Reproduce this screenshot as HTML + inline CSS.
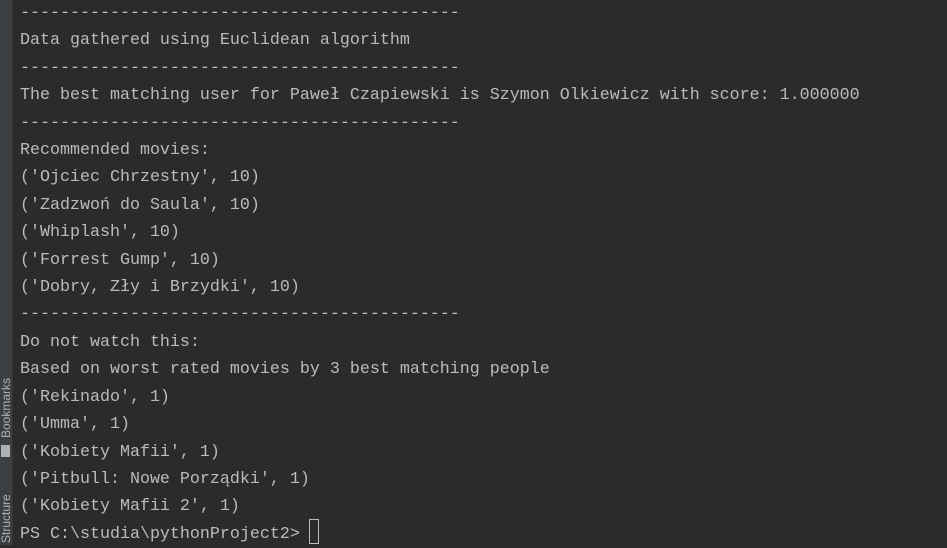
<!DOCTYPE html>
<html><head><meta charset="utf-8"><style>
html,body{margin:0;padding:0;width:947px;height:545px;overflow:hidden;background:#2b2b2b;}
#side{position:absolute;left:0;top:0;width:12px;height:545px;background:#3c3f41;border-right:1px solid #323232;}
.vt{position:absolute;left:-1px;transform-origin:0 0;transform:rotate(-90deg);font:12px "Liberation Sans",sans-serif;color:#aeb1b3;white-space:nowrap;}
#term{position:absolute;left:20px;top:0px;font-family:"Liberation Mono","DejaVu Sans Mono",monospace;font-size:16.67px;line-height:27.4px;color:#bbbbbb;white-space:pre;}
#cur{position:absolute;left:309px;top:519px;width:10px;height:25px;border:1px solid #bbbbbb;box-sizing:border-box;}
</style></head><body>
<div id="side">
<div class="vt" style="top:438px;">Bookmarks</div>
<div style="position:absolute;left:1px;top:445px;width:9px;height:12px;background:#aeb1b3;"></div>
<div class="vt" style="top:543px;">Structure</div>
</div>
<div id="term">--------------------------------------------
Data gathered using Euclidean algorithm
--------------------------------------------
The best matching user for Paweł Czapiewski is Szymon Olkiewicz with score: 1.000000
--------------------------------------------
Recommended movies:
('Ojciec Chrzestny', 10)
('Zadzwoń do Saula', 10)
('Whiplash', 10)
('Forrest Gump', 10)
('Dobry, Zły i Brzydki', 10)
--------------------------------------------
Do not watch this:
Based on worst rated movies by 3 best matching people
('Rekinado', 1)
('Umma', 1)
('Kobiety Mafii', 1)
('Pitbull: Nowe Porządki', 1)
('Kobiety Mafii 2', 1)
PS C:\studia\pythonProject2&gt; </div>
<div id="cur"></div>
</body></html>
